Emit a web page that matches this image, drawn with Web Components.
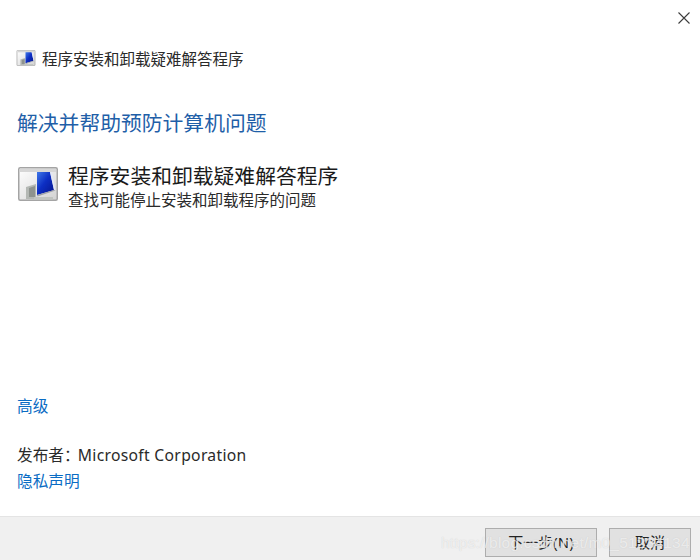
<!DOCTYPE html>
<html lang="zh">
<head>
<meta charset="utf-8">
<title>程序安装和卸载疑难解答程序</title>
<style>
  html, body { margin: 0; height: 100%; background: #fff; }
  body { font-family: "Noto Sans", "Noto Sans CJK SC", sans-serif; overflow: hidden; }
</style>
</head>
<body>
<wizard-window>
  <wizard-header slot="header">程序安装和卸载疑难解答程序</wizard-header>
  <wizard-body slot="body"></wizard-body>
  <wizard-footer slot="footer"></wizard-footer>
</wizard-window>

<script>
const ICON = `
  <svg viewBox="0 0 40 34" xmlns="http://www.w3.org/2000/svg">
    <defs>
      <linearGradient id="s" x1="0" y1="0" x2="1" y2="1">
        <stop offset="0" stop-color="#3f78e8"/>
        <stop offset=".45" stop-color="#0d2fc4"/>
        <stop offset="1" stop-color="#06148c"/>
      </linearGradient>
      <linearGradient id="g" x1="0" y1="0" x2="1" y2="1">
        <stop offset="0" stop-color="#ffffff"/>
        <stop offset="1" stop-color="#d2d2d2"/>
      </linearGradient>
    </defs>
    <rect x="0.75" y="0.75" width="38.500" height="32.500" rx="1.500" fill="url(#g)" stroke="#a4a4a4" stroke-width="1.500"/>
    <rect x="2" y="2" width="36" height="3" fill="#d6d6d6"/>
    <path d="M8 20l10-3v15H8z" fill="#b4b8b4"/>
    <path d="M11 21l6-2v11h-6z" fill="#8e938e"/>
    <path d="M16 30h19v2.500H16z" fill="#c0c4c0"/>
    <path d="M19 5h13l4 18-17 5z" fill="url(#s)"/>
    <path d="M32 5l4 18h1.500L34 5z" fill="#e3e7f5"/>
    <path d="M19 28l17-5 1.500.5-18 6z" fill="#9ea2a8"/>
  </svg>`;

class WizardWindow extends HTMLElement {
  constructor() {
    super();
    this.attachShadow({ mode: 'open' });
    this.shadowRoot.innerHTML = `
      <style>
        :host {
          display: flex;
          flex-direction: column;
          width: 700px;
          height: 560px;
          position: relative;
          overflow: hidden;
          color: #1c1c1c;
        }
        .close {
          position: absolute;
          top: 12px;
          right: 10px;
          width: 12px;
          height: 12px;
        }
        .close svg { display: block; width: 100%; height: 100%; }
        .mark {
          position: absolute;
          left: 441px;
          top: 531px;
          white-space: nowrap;
          font: 15.500px/24px "Liberation Sans", sans-serif;
          letter-spacing: 0.2px;
          color: rgba(255,255,255,.62);
          text-shadow: 0 0 1px rgba(190,190,190,.7);
        }
        ::slotted([slot=body]) { flex: 1; }
      </style>
      <div class="close">
        <svg viewBox="0 0 12 12"><path d="M.5.5l11 11M11.500.5l-11 11" stroke="#3c3c3c" stroke-width="1.100" fill="none"/></svg>
      </div>
      <slot name="header"></slot>
      <slot name="body"></slot>
      <slot name="footer"></slot>
      <div class="mark">https://blog.csdn.net/m0_51234134</div>
    `;
  }
}

class WizardHeader extends HTMLElement {
  constructor() {
    super();
    this.attachShadow({ mode: 'open' });
    this.shadowRoot.innerHTML = `
      <style>
        :host {
          display: flex;
          align-items: center;
          gap: 6px;
          height: 22px;
          padding: 47px 0 0 16px;
          font-size: 15.5px;
          color: #2a2a2a;
        }
        .icon { width: 20px; height: 16px; flex: none; filter: blur(.3px); }
        .icon svg { display: block; width: 100%; height: 100%; }
      </style>
      <span class="icon">${ICON}</span>
      <slot></slot>
    `;
  }
}

class WizardLink extends HTMLElement {
  constructor() {
    super();
    this.attachShadow({ mode: 'open' });
    this.shadowRoot.innerHTML = `
      <style>
        :host { display: block; color: #0a6cc4; font-size: 15.7px; line-height: 22px; }
      </style>
      <slot></slot>
    `;
  }
}

class TroubleshooterItem extends HTMLElement {
  constructor() {
    super();
    this.attachShadow({ mode: 'open' });
    this.shadowRoot.innerHTML = `
      <style>
        :host { display: flex; align-items: flex-start; gap: 10px; }
        .icon { width: 40px; height: 34px; flex: none; margin: 4px 0 0 1px; filter: blur(.3px); }
        .icon svg { display: block; width: 100%; height: 100%; }
        .title { font-size: 20.8px; line-height: 26px; color: #1a1a1a; }
        .desc { font-size: 15.5px; line-height: 22px; margin-top: 0; color: #2a2a2a; }
      </style>
      <span class="icon">${ICON}</span>
      <div>
        <div class="title"><slot name="title"></slot></div>
        <div class="desc"><slot name="desc"></slot></div>
      </div>
    `;
  }
}

class WizardBody extends HTMLElement {
  constructor() {
    super();
    this.attachShadow({ mode: 'open' });
    this.shadowRoot.innerHTML = `
      <style>
        :host {
          display: flex;
          flex-direction: column;
          padding: 0 17px;
        }
        h1 {
          margin: 40px 0 0;
          font-size: 20.8px;
          line-height: 28px;
          font-weight: 400;
          color: #1f5fa8;
        }
        troubleshooter-item { margin-top: 26px; }
        .bottom { margin-top: auto; padding-bottom: 24px; }
        .publisher {
          margin-top: 27px;
          font-size: 15.7px;
          line-height: 22px;
          color: #2a2a2a;
        }
        .publisher span { margin-left: -2px; letter-spacing: 0.3px; }
        .privacy { margin-top: 4px; }
      </style>
      <h1>解决并帮助预防计算机问题</h1>
      <troubleshooter-item>
        <span slot="title">程序安装和卸载疑难解答程序</span>
        <span slot="desc">查找可能停止安装和卸载程序的问题</span>
      </troubleshooter-item>
      <div class="bottom">
        <wizard-link>高级</wizard-link>
        <div class="publisher">发布者&#xFF1A;<span>Microsoft Corporation</span></div>
        <wizard-link class="privacy">隐私声明</wizard-link>
      </div>
    `;
  }
}

class WizardButton extends HTMLElement {
  constructor() {
    super();
    this.attachShadow({ mode: 'open' });
    this.shadowRoot.innerHTML = `
      <style>
        :host {
          display: flex;
          align-items: center;
          justify-content: center;
          box-sizing: border-box;
          height: 29px;
          padding-bottom: 3px;
          background: #e1e1e1;
          border: 1px solid #adadad;
          font-size: 15px;
          color: #222;
        }
      </style>
      <slot></slot>
    `;
  }
}

class WizardFooter extends HTMLElement {
  constructor() {
    super();
    this.attachShadow({ mode: 'open' });
    this.shadowRoot.innerHTML = `
      <style>
        :host {
          display: flex;
          justify-content: flex-end;
          gap: 12px;
          box-sizing: border-box;
          height: 44px;
          padding: 11px 9px 3px 0;
          background: #f0f0f0;
          border-top: 1px solid #e4e4e4;
        }
        .next { width: 112px; }
        .cancel { width: 82px; }
      </style>
      <wizard-button class="next">下一步(N)</wizard-button>
      <wizard-button class="cancel">取消</wizard-button>
    `;
  }
}

customElements.define('wizard-link', WizardLink);
customElements.define('wizard-button', WizardButton);
customElements.define('troubleshooter-item', TroubleshooterItem);
customElements.define('wizard-header', WizardHeader);
customElements.define('wizard-body', WizardBody);
customElements.define('wizard-footer', WizardFooter);
customElements.define('wizard-window', WizardWindow);
</script>
</body>
</html>
